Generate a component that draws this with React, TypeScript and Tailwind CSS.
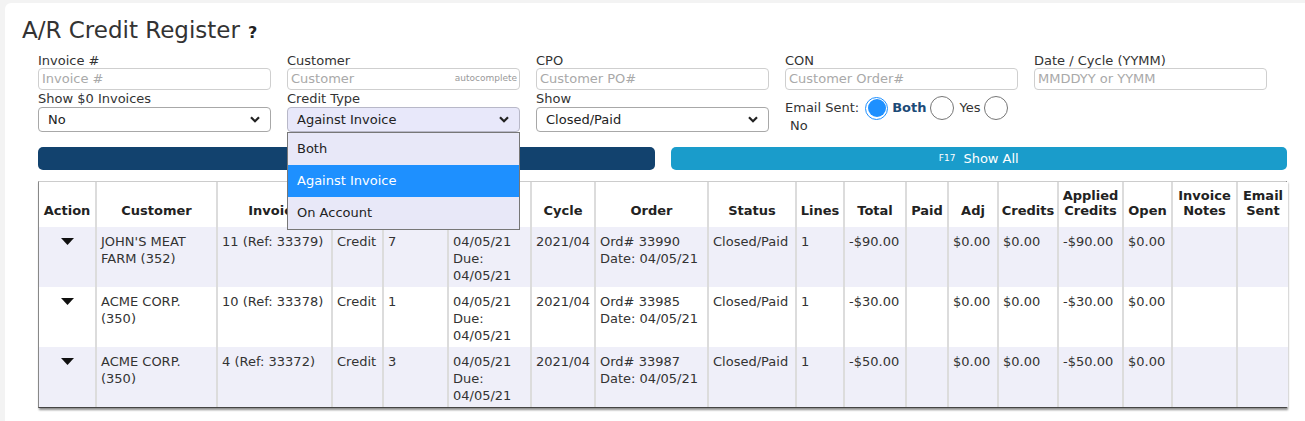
import React from "react";

type Row = {
  customer: string[];
  invoice: string;
  type: string;
  qty: string;
  order: string;
  total: string;
};

const rows: Row[] = [
  { customer: ["JOHN'S MEAT", "FARM (352)"], invoice: "11 (Ref: 33379)", type: "Credit", qty: "7", order: "33990", total: "-$90.00" },
  { customer: ["ACME CORP.", "(350)"], invoice: "10 (Ref: 33378)", type: "Credit", qty: "1", order: "33985", total: "-$30.00" },
  { customer: ["ACME CORP.", "(350)"], invoice: "4 (Ref: 33372)", type: "Credit", qty: "3", order: "33987", total: "-$50.00" },
];

const colWidths = [57, 121, 115, 51, 65, 83, 64, 113, 88, 48, 62, 42, 50, 60, 65, 49, 65, 51];

// headers under the open dropdown are hidden in the screenshot
const headers: string[][] = [
  ["Action"], ["Customer"], ["Invoice"], [""], [""], [""], ["Cycle"], ["Order"],
  ["Status"], ["Lines"], ["Total"], ["Paid"], ["Adj"], ["Credits"], ["Applied", "Credits"],
  ["Open"], ["Invoice", "Notes"], ["Email", "Sent"],
];

function Chevron() {
  return (
    <svg width="10" height="7" viewBox="0 0 10 7">
      <path d="M1 1.2 L5 5.2 L9 1.2" fill="none" stroke="#222" strokeWidth="2.2" />
    </svg>
  );
}

function TextInput({ placeholder, hint }: { placeholder: string; hint?: string }) {
  return (
    <div className="flex h-[22px] items-center justify-between rounded-[4px] border border-[#cfcfcf] bg-white pl-[3px] pr-[2px]">
      <span className="text-[13px] text-[#a9a9a9]">{placeholder}</span>
      {hint && <span className="text-[9px] text-[#999]">{hint}</span>}
    </div>
  );
}

function Select({ value, active }: { value: string; active?: boolean }) {
  return (
    <div
      className={`flex h-[25px] items-center justify-between rounded-[4px] border pl-[9px] pr-[10px] text-[13px] text-[#222] ${
        active ? "border-[#b8b8c8] bg-[#e8e8fa]" : "border-[#a8a8a8] bg-white"
      }`}
    >
      <span>{value}</span>
      <Chevron />
    </div>
  );
}

function Radio({ checked }: { checked?: boolean }) {
  return checked ? (
    <span className="flex h-[23px] w-[23px] shrink-0 items-center justify-center rounded-full border border-[#1e90ff] bg-white">
      <span className="block h-[18px] w-[18px] rounded-full bg-[#1e90ff]" />
    </span>
  ) : (
    <span className="block h-[24px] w-[24px] shrink-0 rounded-full border border-[#767676] bg-white" />
  );
}

function Field({ label, children }: { label: string; children: React.ReactNode }) {
  return (
    <div className="flex flex-col">
      <span className="h-[15px] text-[13px] leading-[15px] text-[#333]">{label}</span>
      {children}
    </div>
  );
}

function Caret() {
  return (
    <svg width="13" height="7" viewBox="0 0 13 7" className="mx-auto">
      <path d="M0 0 H13 L6.5 7 Z" fill="#111" />
    </svg>
  );
}

export default function App() {
  return (
    <div className="min-h-[421px] bg-[#f3f3f3] pl-[5px] pt-[3px] font-['DejaVu_Sans',sans-serif] text-[#333]">
      <div className="h-[418px] rounded-tl-[6px] bg-white pl-[17px] pt-[12px]">
        <h1 className="flex items-baseline text-[23px] leading-[30px] text-[#333]">
          A/R Credit Register
          <span className="ml-[8px] text-[16px] font-bold text-[#222]">?</span>
        </h1>

        <div className="ml-[16px] mt-[5px] w-[1249px]">
          <div className="grid grid-cols-[233px_233px_233px_233px_233px] gap-x-[16px]">
            <Field label="Invoice #">
              <TextInput placeholder="Invoice #" />
            </Field>
            <Field label="Customer">
              <TextInput placeholder="Customer" hint="autocomplete" />
            </Field>
            <Field label="CPO">
              <TextInput placeholder="Customer PO#" />
            </Field>
            <Field label="CON">
              <TextInput placeholder="Customer Order#" />
            </Field>
            <Field label="Date / Cycle (YYMM)">
              <TextInput placeholder="MMDDYY or YYMM" />
            </Field>
          </div>

          <div className="mt-[1px] grid grid-cols-[233px_233px_233px_233px_233px] gap-x-[16px]">
            <div className="flex flex-col">
              <span className="h-[16px] text-[13px] leading-[15px]">Show $0 Invoices</span>
              <Select value="No" />
            </div>
            <div className="relative flex flex-col">
              <span className="h-[16px] text-[13px] leading-[15px]">Credit Type</span>
              <Select value="Against Invoice" active />
              <div className="absolute left-0 top-[41px] z-10 w-[233px] border border-[#777] bg-[#e8e8f8] text-[13px]">
                <div className="flex h-[32px] items-center pl-[9px] text-[#222]">Both</div>
                <div className="flex h-[32px] items-center bg-[#1e90ff] pl-[9px] text-white">Against Invoice</div>
                <div className="flex h-[32px] items-center pl-[9px] text-[#222]">On Account</div>
              </div>
            </div>
            <div className="flex flex-col">
              <span className="h-[16px] text-[13px] leading-[15px]">Show</span>
              <Select value="Closed/Paid" />
            </div>
            <div className="flex flex-col pt-[5px] text-[13px]">
              <div className="flex items-center">
                <span>Email Sent:</span>
                <span className="ml-[6px]"><Radio checked /></span>
                <span className="ml-[4px] font-bold text-[#1c4b78]">Both</span>
                <span className="ml-[4px]"><Radio /></span>
                <span className="ml-[5px]">Yes</span>
                <span className="ml-[4px]"><Radio /></span>
              </div>
              <span className="-mt-[2px] pl-[5px] leading-[15px]">No</span>
            </div>
            <div />
          </div>

          <div className="mt-[14px] grid grid-cols-2 gap-x-[16px]">
            <button className="h-[23px] rounded-[5px] bg-[#12426e]" />
            <button className="flex h-[23px] items-center justify-center rounded-[5px] bg-[#1a9ccb] text-white">
              <span className="mr-[8px] text-[9px]">F17</span>
              <span className="text-[13px]">Show All</span>
            </button>
          </div>

          <div className="mt-[11px] border-r border-b border-l border-t border-r-[#555] border-b-[#444] border-l-[#888] border-t-[#ccc] shadow-[1px_2px_2px_rgba(0,0,0,0.45)]">
            <table className="w-full table-fixed border-collapse text-[13px] leading-[17px]">
              <colgroup>
                {colWidths.map((w, i) => (
                  <col key={i} style={{ width: w }} />
                ))}
              </colgroup>
              <thead>
                <tr className="h-[45px] bg-white">
                  {headers.map((h, i) => (
                    <th
                      key={i}
                      className="border-x-2 border-[#dcdcdc] px-[2px] pb-[9px] align-bottom text-center font-bold text-[#222] first:border-l-0 last:border-r-0"
                    >
                      {h.map((l, j) => (
                        <div key={j} className="leading-[15px]">{l}</div>
                      ))}
                    </th>
                  ))}
                </tr>
              </thead>
              <tbody>
                {rows.map((r, i) => {
                  const cells: React.ReactNode[] = [
                    <div className="pt-[5px]"><Caret /></div>,
                    <>{r.customer[0]}<br />{r.customer[1]}</>,
                    r.invoice,
                    r.type,
                    r.qty,
                    <>04/05/21<br />Due:<br />04/05/21</>,
                    "2021/04",
                    <>Ord# {r.order}<br />Date: 04/05/21</>,
                    "Closed/Paid",
                    "1",
                    r.total,
                    "",
                    "$0.00",
                    "$0.00",
                    r.total,
                    "$0.00",
                    "",
                    "",
                  ];
                  return (
                    <tr key={i} className={`h-[60px] ${i % 2 === 0 ? "bg-[#efeff9]" : "bg-white"}`}>
                      {cells.map((c, j) => (
                        <td
                          key={j}
                          className="border-x-2 border-[#dcdcdc] px-[4px] pt-[6px] align-top whitespace-nowrap text-[#333] first:border-l-0 last:border-r-0"
                        >
                          {c}
                        </td>
                      ))}
                    </tr>
                  );
                })}
              </tbody>
            </table>
          </div>
        </div>
      </div>
    </div>
  );
}
